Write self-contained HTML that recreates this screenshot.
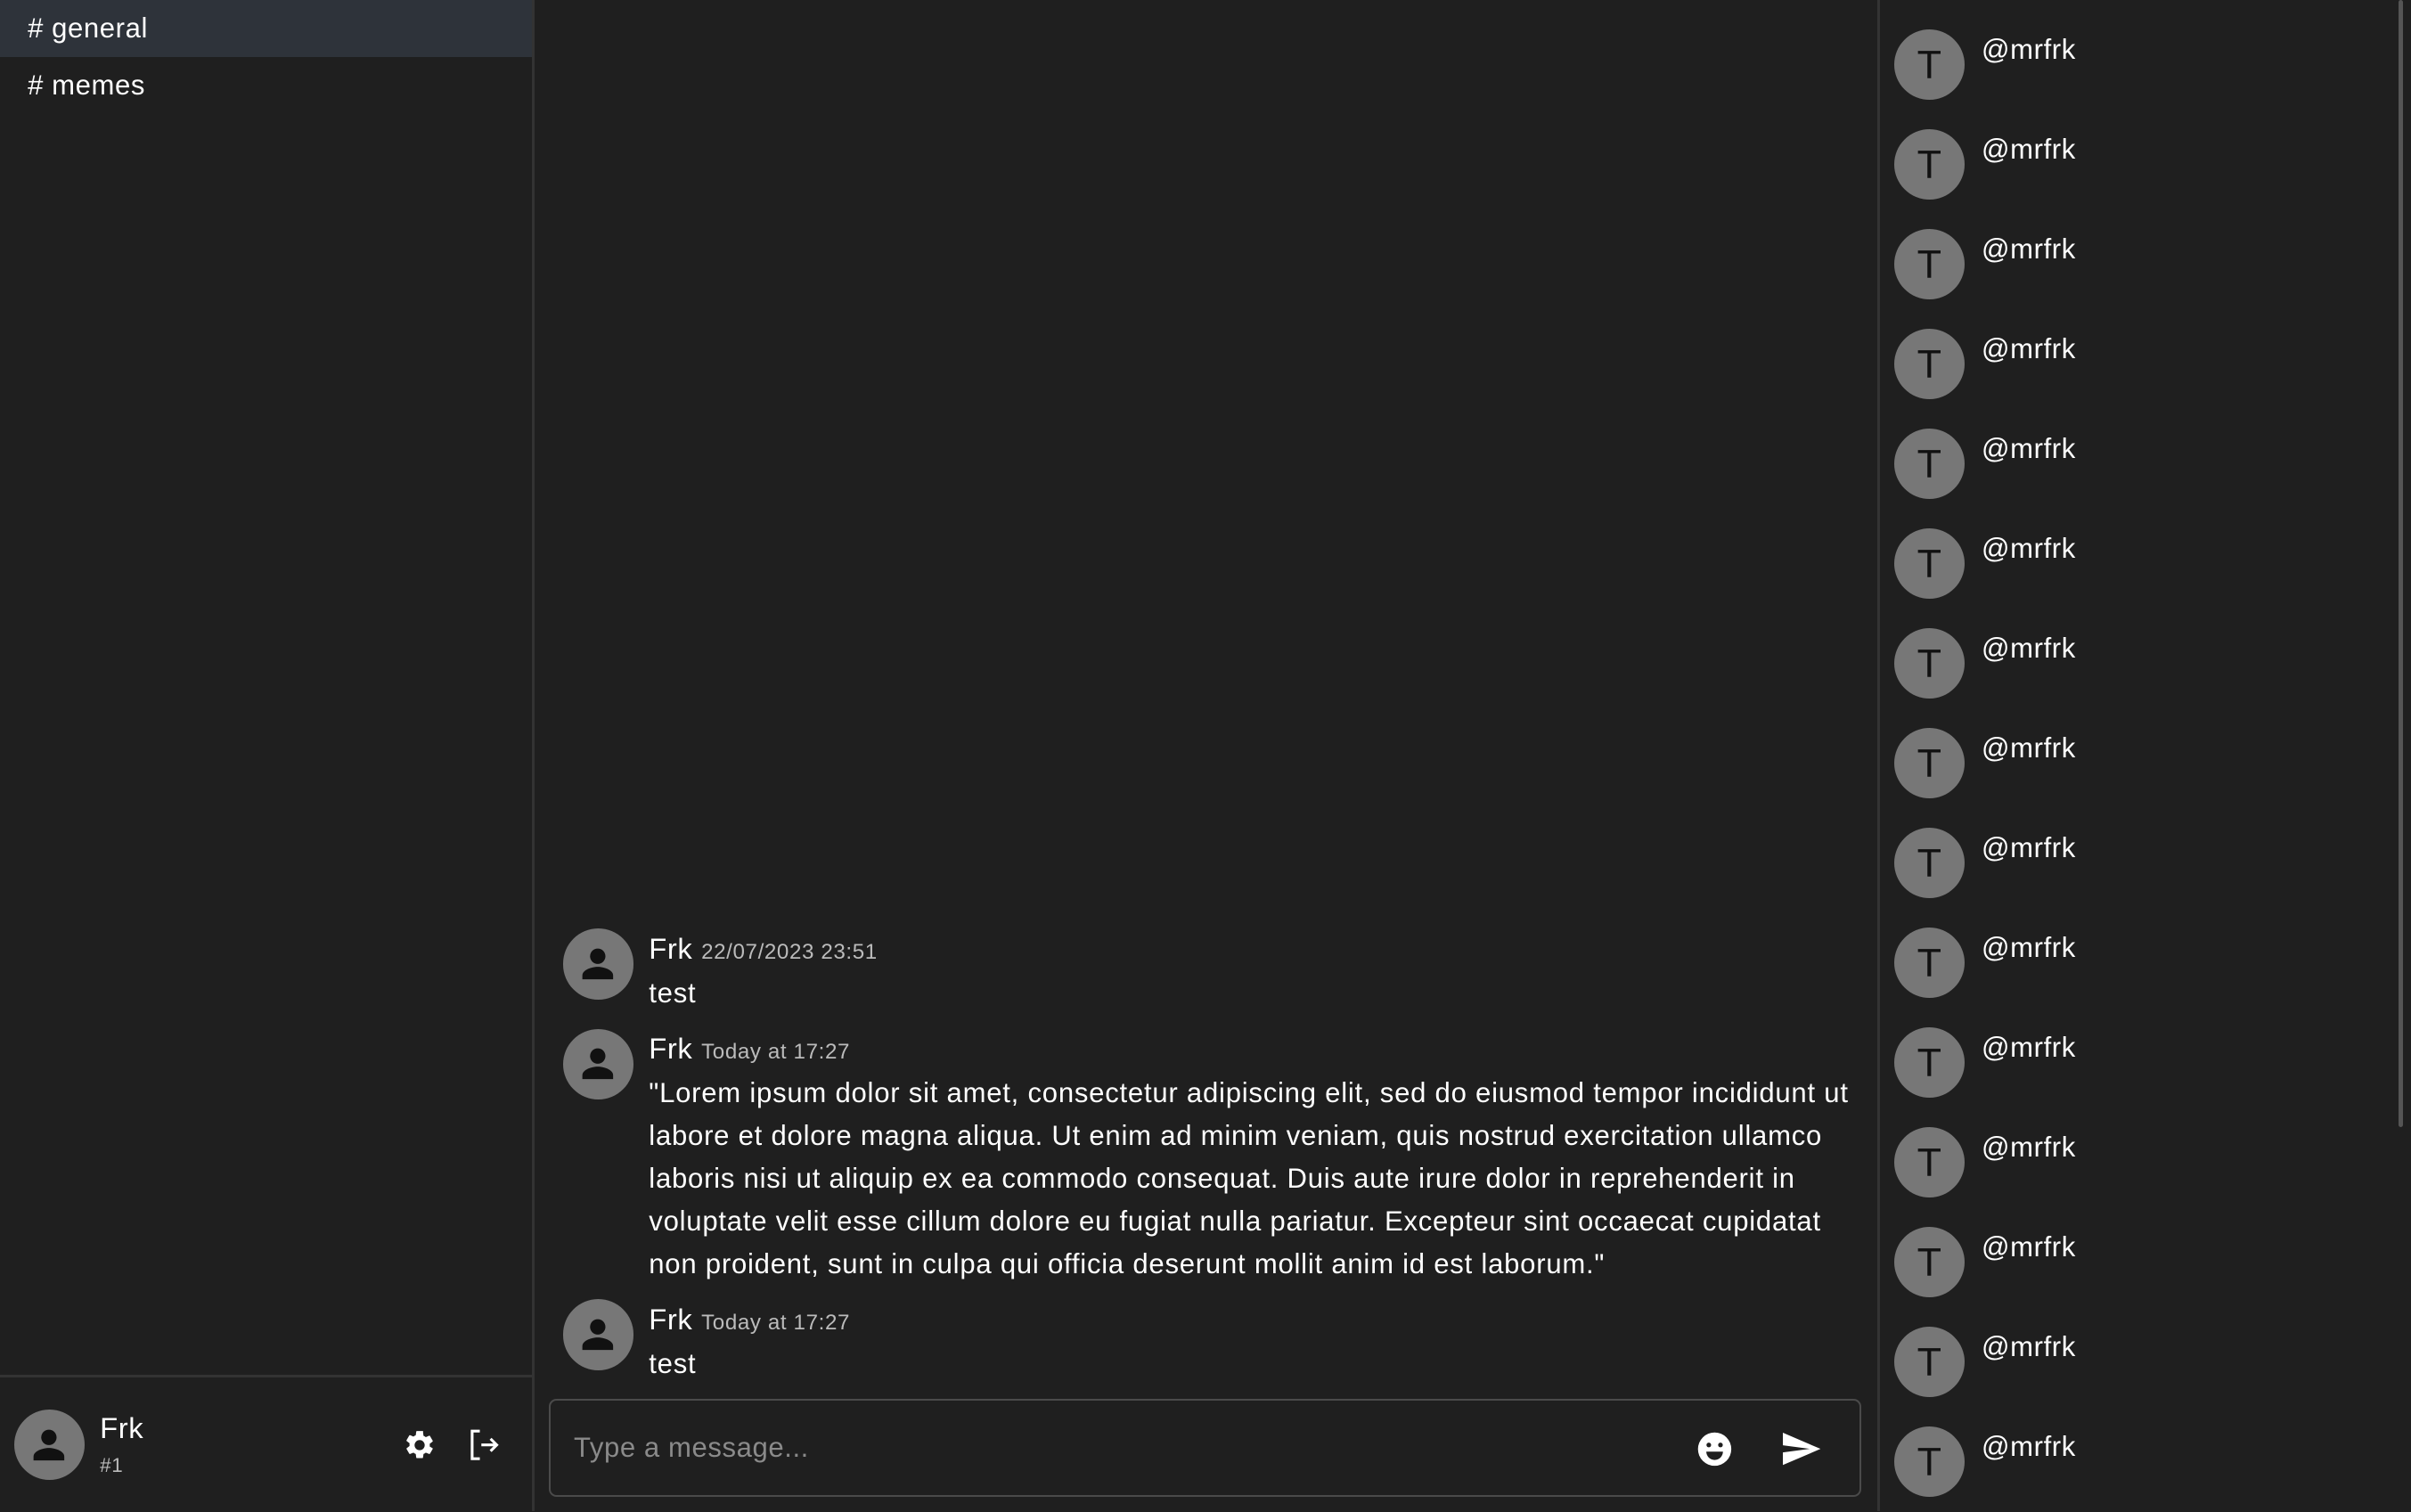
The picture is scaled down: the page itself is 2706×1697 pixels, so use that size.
<!DOCTYPE html>
<html><head><meta charset="utf-8"><style>
html,body{margin:0;padding:0;background:#1f1f1f;overflow:hidden}
body{width:1568px;height:983px;zoom:1.72577;position:relative;font-family:"Liberation Sans",Arial,sans-serif;color:#fff;letter-spacing:0.35px}
.left{position:absolute;left:0;top:0;width:346px;height:983px;border-right:2px solid #333}
.ch{height:37px;line-height:37px;padding-left:18px;font-size:18px}
.ch.a{background:#2e333a}
.user{position:absolute;left:0;right:0;top:894px;bottom:0;border-top:2px solid #333}
.av{position:absolute;width:46px;height:46px;border-radius:50%;background:#777}
.av svg{position:absolute;left:8px;top:8px}
.main{position:absolute;left:348px;top:0;width:873px;height:983px}
.right{position:absolute;left:1221px;top:0;width:347px;height:983px;border-left:2px solid #333}
.tl{position:absolute;width:46px;height:46px;border-radius:50%;background:#777;color:#111;font-size:26px;text-align:center;line-height:46px;letter-spacing:0}
.nm{position:absolute;font-size:18px}
.msg{position:absolute;left:18px;width:850px}
.msg .t{position:absolute;left:56px;top:2px;font-size:19px}
.msg .t small{font-size:14px;color:#bbb}
.msg .b{position:absolute;left:56px;top:28px;font-size:18px;line-height:27.8px;width:785px;letter-spacing:0.45px}
</style></head><body>
<div class="left">
<div class="ch a"># general</div>
<div class="ch"># memes</div>
<div class="user">
<div class="av" style="left:9px;top:21px"><svg width="30" height="30" viewBox="0 0 24 24"><circle cx="12" cy="8" r="4" fill="#111"/><path d="M4 20v-2c0-3 5-4.5 8-4.5s8 1.5 8 4.5v2z" fill="#111"/></svg></div>
<div style="position:absolute;left:65px;top:22px;font-size:19px">Frk</div>
<div style="position:absolute;left:65px;top:50px;font-size:13px;color:#bbb">#1</div>
<svg style="position:absolute;left:262px;top:33px" width="22" height="22" viewBox="0 0 24 24"><path fill="#fff" d="M19.14 12.94c.04-.3.06-.61.06-.94s-.02-.64-.07-.94l2.030-1.58a.5.5 0 0 0 .12-.61l-1.92-3.32a.5.5 0 0 0-.59-.22l-2.39.96a7 7 0 0 0-1.62-.94l-.36-2.540A.48.48 0 0 0 13.92 2h-3.84a.48.48 0 0 0-.48.41l-.36 2.54c-.59.24-1.13.57-1.62.94l-2.39-.96a.5.5 0 0 0-.59.22L2.72 8.47a.47.47 0 0 0 .12.61l2.03 1.58c-.05.3-.07.63-.07.94s.02.64.07.94l-2.03 1.58a.5.5 0 0 0-.12.61l1.92 3.32c.12.22.37.29.59.22l2.39-.96c.5.38 1.03.7 1.62.94l.36 2.54c.05.24.24.41.48.41h3.84c.24 0 .44-.17.47-.41l.36-2.54c.59-.24 1.13-.56 1.62-.94l2.39.96c.22.08.47 0 .59-.22l1.92-3.32a.47.47 0 0 0-.12-.61zM12 15.6A3.6 3.6 0 1 1 12 8.4a3.6 3.6 0 0 1 0 7.2z"/></svg>
<svg style="position:absolute;left:303px;top:32px" width="24" height="24" viewBox="0 0 24 24" fill="none" stroke="#fff" stroke-width="1.8"><path d="M9 3H4v18h5M10 12h10M16 8l4 4-4 4"/></svg>
</div>
</div>
<div class="main">
<div class="msg" style="top:604px"><div class="av" style="left:0;top:0"><svg width="30" height="30" viewBox="0 0 24 24"><circle cx="12" cy="8" r="4" fill="#111"/><path d="M4 20v-2c0-3 5-4.5 8-4.5s8 1.5 8 4.5v2z" fill="#111"/></svg></div><div class="t">Frk <small>22/07/2023 23:51</small></div><div class="b">test</div></div>
<div class="msg" style="top:669px"><div class="av" style="left:0;top:0"><svg width="30" height="30" viewBox="0 0 24 24"><circle cx="12" cy="8" r="4" fill="#111"/><path d="M4 20v-2c0-3 5-4.5 8-4.5s8 1.5 8 4.5v2z" fill="#111"/></svg></div><div class="t">Frk <small>Today at 17:27</small></div><div class="b">"Lorem ipsum dolor sit amet, consectetur adipiscing elit, sed do eiusmod tempor incididunt ut labore et dolore magna aliqua. Ut enim ad minim veniam, quis nostrud exercitation ullamco laboris nisi ut aliquip ex ea commodo consequat. Duis aute irure dolor in reprehenderit in voluptate velit esse cillum dolore eu fugiat nulla pariatur. Excepteur sint occaecat cupidatat non proident, sunt in culpa qui officia deserunt mollit anim id est laborum."</div></div>
<div class="msg" style="top:845px"><div class="av" style="left:0;top:0"><svg width="30" height="30" viewBox="0 0 24 24"><circle cx="12" cy="8" r="4" fill="#111"/><path d="M4 20v-2c0-3 5-4.5 8-4.5s8 1.5 8 4.5v2z" fill="#111"/></svg></div><div class="t">Frk <small>Today at 17:27</small></div><div class="b">test</div></div>
<div style="position:absolute;left:9px;top:910px;width:851px;height:61px;border:1.5px solid #4a4a4a;border-radius:5px">
<div style="position:absolute;left:15px;top:20px;font-size:18px;color:#8a8a8a">Type a message...</div>
<svg style="position:absolute;left:744px;top:18px" width="26" height="26" viewBox="0 0 24 24"><circle cx="12" cy="12" r="10" fill="#fff"/><circle cx="8.5" cy="9.5" r="1.4" fill="#1f1f1f"/><circle cx="15.5" cy="9.5" r="1.4" fill="#1f1f1f"/><path d="M7 13.5h10a5 5 0 0 1-10 0z" fill="#1f1f1f"/></svg>
<svg style="position:absolute;left:799px;top:17px" width="28" height="28" viewBox="0 0 24 24"><path fill="#fff" d="M2 21l21-9L2 3v7l15 2-15 2z"/></svg>
</div>
</div>
<div class="right">
<div style="position:absolute;left:337px;top:0;width:3px;height:733px;background:#555;border-radius:2px"></div>
<div id="mem"></div>
</div>
<script>
var h='';for(var i=0;i<15;i++){var y=19+i*64.9;h+='<div class="tl" style="left:9px;top:'+y+'px">T</div><div class="nm" style="left:66px;top:'+(y+3)+'px">@mrfrk</div>';}
document.getElementById('mem').innerHTML=h;
</script>
</body></html>
